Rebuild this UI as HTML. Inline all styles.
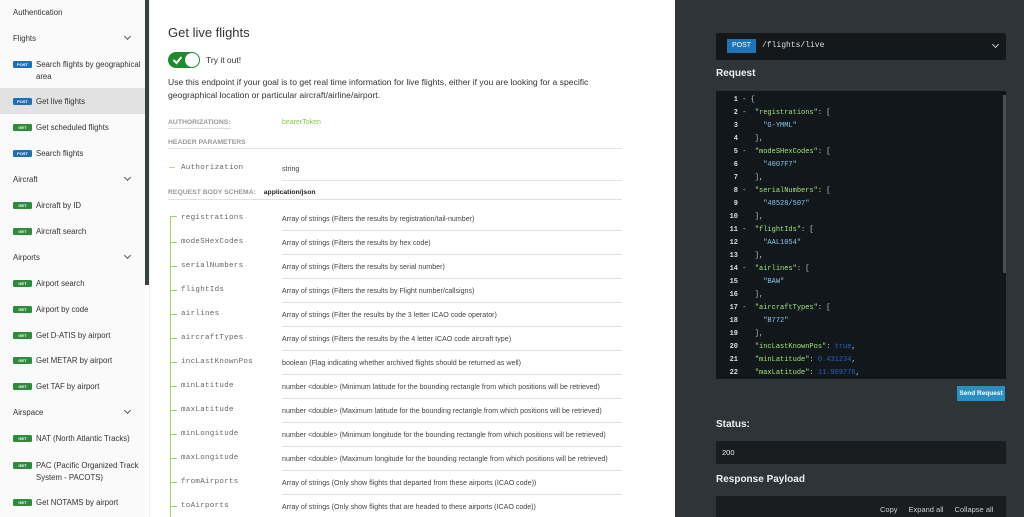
<!DOCTYPE html>
<html><head><meta charset="utf-8"><style>
*{margin:0;padding:0;box-sizing:border-box}
body{width:1024px;height:517px;overflow:hidden;font-family:"Liberation Sans",sans-serif;position:relative;background:#fff}
.abs{position:absolute}
#side{left:0;top:0;width:145px;height:517px;background:#fafafa}
#sb{left:145px;top:0;width:4px;height:285px;background:#3a3f42}
.si{position:absolute;left:13px;font-size:7.8px;color:#333;white-space:nowrap}
.sec{position:absolute;left:13px;font-size:7.8px;color:#333}
.chev{position:absolute;left:125px;width:5px;height:5px;border-right:1.2px solid #555;border-bottom:1.2px solid #555;transform:rotate(45deg)}
.b{display:inline-block;width:19px;height:7px;border-radius:1.5px;font-size:4px;color:#fff;text-align:center;line-height:7px;font-weight:bold;margin-right:4px;vertical-align:1px}
.get{background:#2e8b3a}.post{background:#1f6fb5}
.mono{font-family:"Liberation Mono",monospace}
.pn{position:absolute;left:181px;font-size:7.5px;color:#666;font-family:"Liberation Mono",monospace;letter-spacing:0.3px}
.pd{position:absolute;left:282px;font-size:7.1px;color:#444}
.ln{position:absolute;left:282px;width:340px;height:1px;background:#dbe3e8}
.tk{position:absolute;left:171px;width:6px;height:1px;background:#9fd36a}
#right{left:675px;top:0;width:349px;height:517px;background:#2e3437}
.cl{position:absolute;left:0;font-family:"Liberation Mono",monospace;font-size:7px;white-space:pre;color:#ccc}
.n{display:inline-block;width:22px;text-align:right;color:#ddd;font-weight:bold}
.k{color:#a0e37a}.s{color:#8fc6ea}.v{color:#2860c0}
</style></head><body>
<div id="side" class="abs">
<div class="si" style="top:8px">Authentication</div>
<div class="sec" style="top:34px">Flights</div><div class="chev" style="top:34px"></div>
<div class="si" style="top:59px;line-height:12px"><span class="b post">POST</span>Search flights by geographical<br><span style="margin-left:23px">area</span></div>
<div class="abs" style="left:0;top:88px;width:145px;height:26px;background:#e2e2e2"></div>
<div class="si" style="top:97px"><span class="b post">POST</span>Get live flights</div>
<div class="si" style="top:123px"><span class="b get">GET</span>Get scheduled flights</div>
<div class="si" style="top:149px"><span class="b post">POST</span>Search flights</div>
<div class="sec" style="top:175px">Aircraft</div><div class="chev" style="top:175px"></div>
<div class="si" style="top:201px"><span class="b get">GET</span>Aircraft by ID</div>
<div class="si" style="top:227px"><span class="b get">GET</span>Aircraft search</div>
<div class="sec" style="top:253px">Airports</div><div class="chev" style="top:253px"></div>
<div class="si" style="top:279px"><span class="b get">GET</span>Airport search</div>
<div class="si" style="top:305px"><span class="b get">GET</span>Airport by code</div>
<div class="si" style="top:331px"><span class="b get">GET</span>Get D-ATIS by airport</div>
<div class="si" style="top:356px"><span class="b get">GET</span>Get METAR by airport</div>
<div class="si" style="top:382px"><span class="b get">GET</span>Get TAF by airport</div>
<div class="sec" style="top:408px">Airspace</div><div class="chev" style="top:408px"></div>
<div class="si" style="top:434px"><span class="b get">GET</span>NAT (North Atlantic Tracks)</div>
<div class="si" style="top:460px;line-height:12px"><span class="b get">GET</span>PAC (Pacific Organized Track<br><span style="margin-left:23px">System - PACOTS)</span></div>
<div class="si" style="top:498px"><span class="b get">GET</span>Get NOTAMS by airport</div>
</div>
<div id="sb" class="abs"></div>
<div class="abs" style="left:149px;top:0;width:1px;height:517px;background:#eee"></div>

<div class="abs" style="left:168px;top:25px;font-size:13px;color:#333">Get live flights</div>
<div class="abs" style="left:168px;top:52px;width:32px;height:16px;border-radius:8px;background:#1f8a2e"></div>
<div class="abs" style="left:185px;top:53px;width:14px;height:14px;border-radius:7px;background:#fff"></div>
<svg class="abs" style="left:172px;top:55px" width="11" height="10"><path d="M1.5 5 L4.5 8 L9.5 2" stroke="#fff" stroke-width="2" fill="none"/></svg>
<div class="abs" style="left:206px;top:55px;font-size:8.5px;color:#333">Try it out!</div>
<div class="abs" style="left:168px;top:76px;font-size:8.6px;color:#333;line-height:12.5px;width:445px">Use this endpoint if your goal is to get real time information for live flights, either if you are looking for a specific geographical location or particular aircraft/airline/airport.</div>
<div class="abs" style="left:168px;top:119px;font-size:6.8px;color:#999;font-weight:bold;border-bottom:1px solid #ddd;padding-bottom:2px">AUTHORIZATIONS:</div>
<div class="abs" style="left:282px;top:119px;font-size:7px;color:#8bc34a">bearerToken</div>
<div class="abs" style="left:168px;top:139px;font-size:6.8px;color:#999;font-weight:bold">HEADER PARAMETERS</div>
<div class="abs" style="left:168px;top:148px;width:454px;height:1px;background:#dbe3e8"></div>
<div class="abs" style="left:169px;top:167px;width:6px;height:1px;background:#b5dc8a"></div>
<div class="pn" style="top:164px">Authorization</div>
<div class="pd" style="top:165px">string</div>
<div class="ln" style="top:180px"></div>
<div class="abs" style="left:168px;top:189px;font-size:6.8px;color:#999;font-weight:bold">REQUEST BODY SCHEMA: <span style="color:#222;margin-left:6px">application/json</span></div>
<div class="abs" style="left:168px;top:199px;width:454px;height:1px;background:#dbe3e8"></div>
<div class="abs" style="left:170px;top:216px;width:1px;height:301px;background:#9fd36a"></div>
<div class="tk" style="top:216px"></div><div class="pn" style="top:214px">registrations</div><div class="pd" style="top:215px">Array of strings (Filters the results by registration/tail-number)</div><div class="ln" style="top:230px"></div>
<div class="tk" style="top:242px"></div><div class="pn" style="top:238px">modeSHexCodes</div><div class="pd" style="top:239px">Array of strings (Filters the results by hex code)</div><div class="ln" style="top:254px"></div>
<div class="tk" style="top:266px"></div><div class="pn" style="top:262px">serialNumbers</div><div class="pd" style="top:263px">Array of strings (Filters the results by serial number)</div><div class="ln" style="top:278px"></div>
<div class="tk" style="top:290px"></div><div class="pn" style="top:286px">flightIds</div><div class="pd" style="top:287px">Array of strings (Filters the results by Flight number/callsigns)</div><div class="ln" style="top:302px"></div>
<div class="tk" style="top:314px"></div><div class="pn" style="top:310px">airlines</div><div class="pd" style="top:311px">Array of strings (Filter the results by the 3 letter ICAO code operator)</div><div class="ln" style="top:326px"></div>
<div class="tk" style="top:338px"></div><div class="pn" style="top:334px">aircraftTypes</div><div class="pd" style="top:335px">Array of strings (Filters the results by the 4 letter ICAO code aircraft type)</div><div class="ln" style="top:350px"></div>
<div class="tk" style="top:362px"></div><div class="pn" style="top:358px">incLastKnownPos</div><div class="pd" style="top:359px">boolean (Flag indicating whether archived flights should be returned as well)</div><div class="ln" style="top:374px"></div>
<div class="tk" style="top:386px"></div><div class="pn" style="top:382px">minLatitude</div><div class="pd" style="top:383px">number &lt;double&gt; (Minimum latitude for the bounding rectangle from which positions will be retrieved)</div><div class="ln" style="top:398px"></div>
<div class="tk" style="top:410px"></div><div class="pn" style="top:406px">maxLatitude</div><div class="pd" style="top:407px">number &lt;double&gt; (Maximum latitude for the bounding rectangle from which positions will be retrieved)</div><div class="ln" style="top:422px"></div>
<div class="tk" style="top:434px"></div><div class="pn" style="top:430px">minLongitude</div><div class="pd" style="top:431px">number &lt;double&gt; (Minimum longitude for the bounding rectangle from which positions will be retrieved)</div><div class="ln" style="top:446px"></div>
<div class="tk" style="top:458px"></div><div class="pn" style="top:454px">maxLongitude</div><div class="pd" style="top:455px">number &lt;double&gt; (Maximum longitude for the bounding rectangle from which positions will be retrieved)</div><div class="ln" style="top:470px"></div>
<div class="tk" style="top:482px"></div><div class="pn" style="top:478px">fromAirports</div><div class="pd" style="top:479px">Array of strings (Only show flights that departed from these airports (ICAO code))</div><div class="ln" style="top:494px"></div>
<div class="tk" style="top:506px"></div><div class="pn" style="top:502px">toAirports</div><div class="pd" style="top:503px">Array of strings (Only show flights that are headed to these airports (ICAO code))</div>

<div id="right" class="abs">
<div class="abs" style="left:41px;top:33px;width:290px;height:27px;background:#14181b;border-radius:2px"></div>
<div class="abs" style="left:52px;top:39px;width:29px;height:14px;background:#1f74b8;color:#fff;font-size:7px;text-align:center;line-height:14px">POST</div>
<div class="abs mono" style="left:87px;top:41px;color:#ddd;font-size:8px">/flights/live</div>
<div class="abs" style="left:318px;top:42px;width:5px;height:5px;border-right:1.3px solid #ccc;border-bottom:1.3px solid #ccc;transform:rotate(45deg)"></div>
<div class="abs" style="left:41px;top:68px;color:#f0f0f0;font-size:10px;font-weight:bold">Request</div>
<div class="abs" style="left:41px;top:91px;width:290px;height:288px;background:#11171b;overflow:hidden">
<div class="abs" style="left:287px;top:4px;width:3px;height:178px;background:#4a4f52"></div>
<div class="cl" style="top:5px"><span class="n">1</span> - {</div>
<div class="cl" style="top:18px"><span class="n">2</span> -  <span class="k">"registrations"</span>: [</div>
<div class="cl" style="top:31px"><span class="n">3</span>      <span class="s">"G-YMML"</span></div>
<div class="cl" style="top:44px"><span class="n">4</span>    ],</div>
<div class="cl" style="top:57px"><span class="n">5</span> -  <span class="k">"modeSHexCodes"</span>: [</div>
<div class="cl" style="top:70px"><span class="n">6</span>      <span class="s">"4007F7"</span></div>
<div class="cl" style="top:83px"><span class="n">7</span>    ],</div>
<div class="cl" style="top:96px"><span class="n">8</span> -  <span class="k">"serialNumbers"</span>: [</div>
<div class="cl" style="top:109px"><span class="n">9</span>      <span class="s">"48528/507"</span></div>
<div class="cl" style="top:122px"><span class="n">10</span>    ],</div>
<div class="cl" style="top:135px"><span class="n">11</span> -  <span class="k">"flightIds"</span>: [</div>
<div class="cl" style="top:148px"><span class="n">12</span>      <span class="s">"AAL1054"</span></div>
<div class="cl" style="top:161px"><span class="n">13</span>    ],</div>
<div class="cl" style="top:174px"><span class="n">14</span> -  <span class="k">"airlines"</span>: [</div>
<div class="cl" style="top:187px"><span class="n">15</span>      <span class="s">"BAW"</span></div>
<div class="cl" style="top:200px"><span class="n">16</span>    ],</div>
<div class="cl" style="top:213px"><span class="n">17</span> -  <span class="k">"aircraftTypes"</span>: [</div>
<div class="cl" style="top:226px"><span class="n">18</span>      <span class="s">"B772"</span></div>
<div class="cl" style="top:239px"><span class="n">19</span>    ],</div>
<div class="cl" style="top:252px"><span class="n">20</span>    <span class="k">"incLastKnownPos"</span>: <span class="v">true</span>,</div>
<div class="cl" style="top:265px"><span class="n">21</span>    <span class="k">"minLatitude"</span>: <span class="v">0.431234</span>,</div>
<div class="cl" style="top:278px"><span class="n">22</span>    <span class="k">"maxLatitude"</span>: <span class="v">11.909776</span>,</div>
</div>
<div class="abs" style="left:282px;top:386px;width:48px;height:15px;background:#2a8fc0;color:#fff;font-size:6.5px;font-weight:bold;text-align:center;line-height:15px">Send Request</div>
<div class="abs" style="left:41px;top:419px;color:#f0f0f0;font-size:10px;font-weight:bold">Status:</div>
<div class="abs" style="left:41px;top:441px;width:290px;height:23px;background:#1a1c1e;color:#eee;font-size:7.5px;padding:7px 0 0 6px">200</div>
<div class="abs" style="left:41px;top:474px;color:#f0f0f0;font-size:10px;font-weight:bold">Response Payload</div>
<div class="abs" style="left:41px;top:496px;width:290px;height:21px;background:#1a1c1e"></div>
<div class="abs" style="left:205px;top:505px;color:#ccc;font-size:7.5px;white-space:nowrap">Copy<span style="margin-left:11px">Expand all</span><span style="margin-left:11px">Collapse all</span></div>
</div>
</body></html>
